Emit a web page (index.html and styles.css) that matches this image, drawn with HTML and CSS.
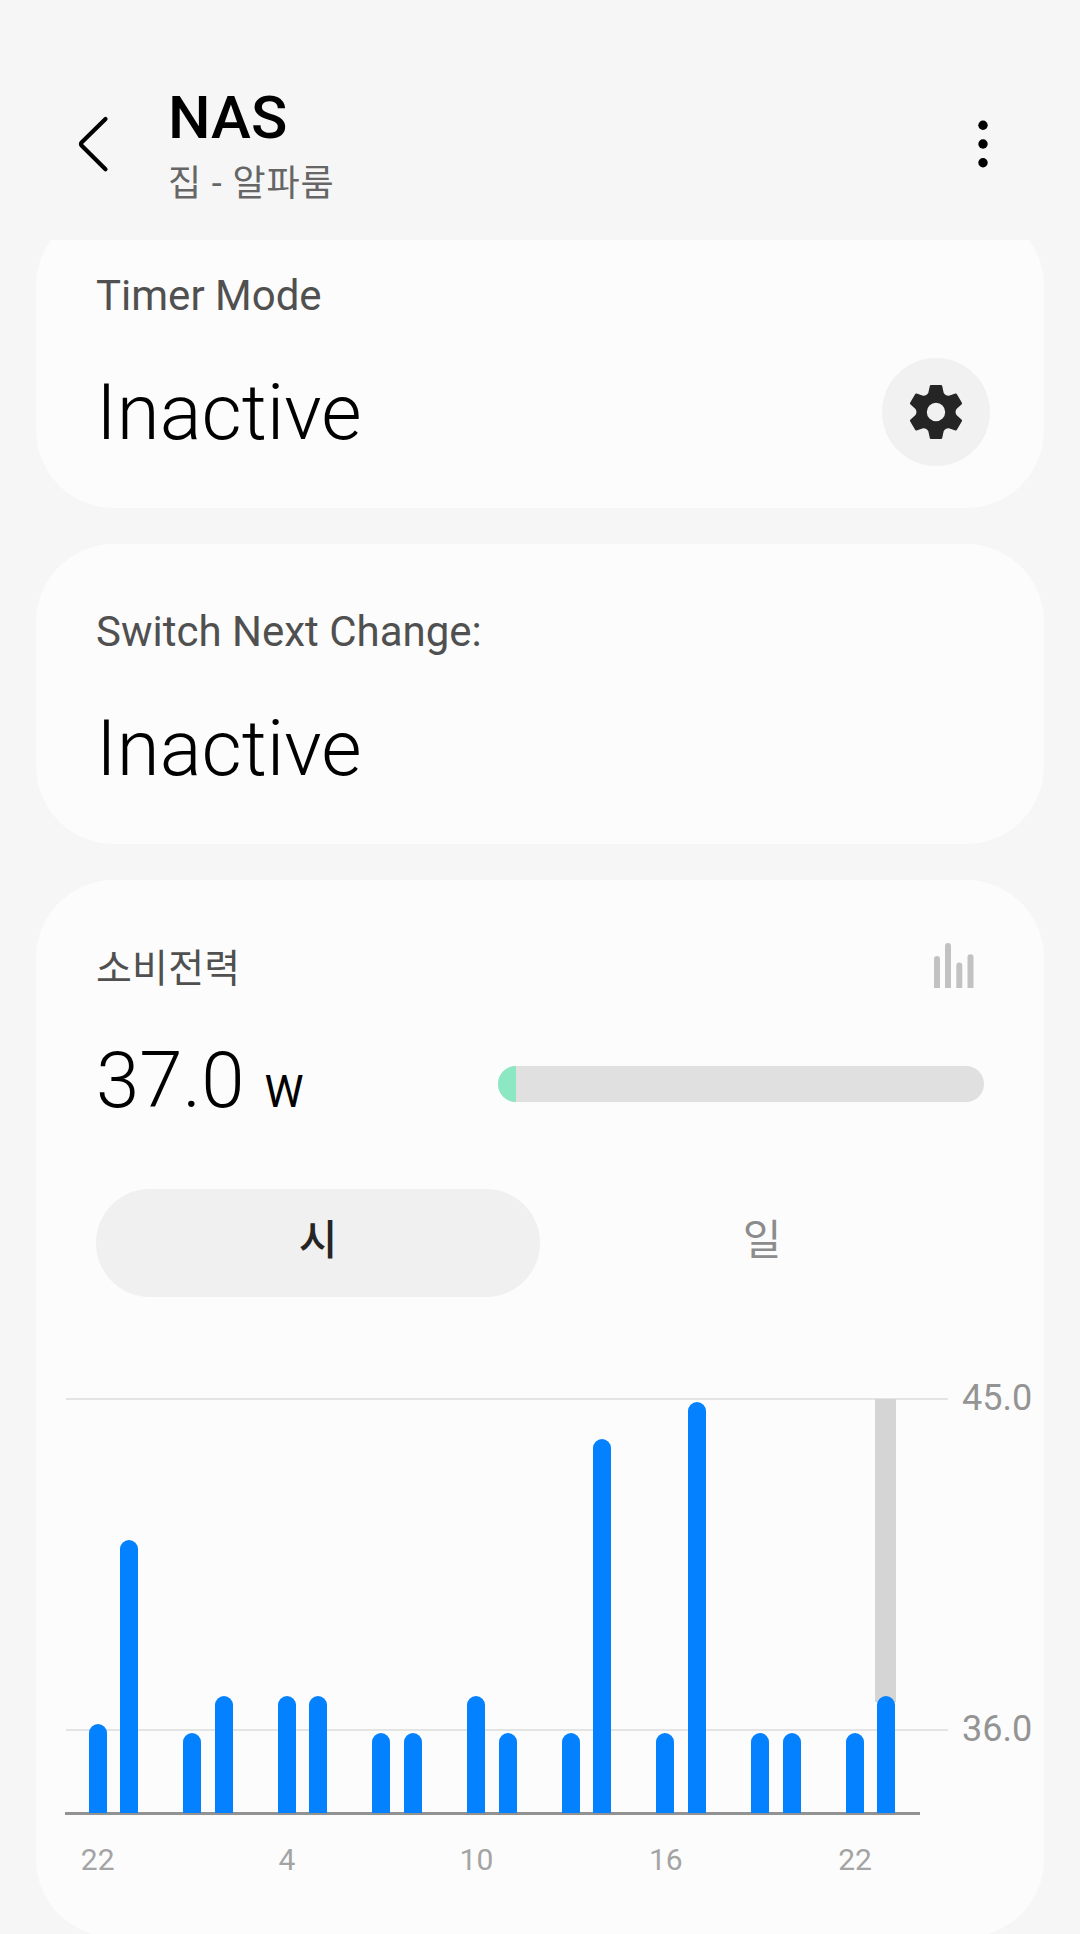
FILE: index.html
```html
<!DOCTYPE html>
<html lang="ko">
<head>
<meta charset="utf-8">
<title>NAS</title>
<link rel="stylesheet" href="styles.css">
</head>
<body>
<header class="topbar">
  <svg class="back" width="36" height="60" viewBox="0 0 36 60" aria-hidden="true"><path d="M29.5 5 5.800 28.200Q4 30 5.800 31.800L29.500 55.300"/></svg>
  <div class="heading">
    <h1 class="title">NAS</h1>
    <p class="subtitle">집 - 알파룸</p>
  </div>
  <svg class="more" width="12" height="50" viewBox="0 0 12 50" aria-hidden="true"><circle cx="6" cy="6.3" r="4.7"/><circle cx="6" cy="25" r="4.7"/><circle cx="6" cy="43.7" r="4.7"/></svg>
</header>
<main class="content">
  <section class="card timer">
    <h2 class="label">Timer Mode</h2>
    <div class="row">
      <p class="value">Inactive</p>
      <button class="settings" aria-label="Settings">
        <svg width="56" height="56" viewBox="-28 -28 56 56"><path fill-rule="evenodd" d="M-5-27H5Q6-27 6.2-26L7.65-19.25Q9.3-16.1 12.85-16.25L19.4-18.4Q20.4-18.7 20.9-17.8L25.9-9.2Q26.3-8.3 25.7-7.7L20.5-3Q18.6 0 20.5 3L25.7 7.7Q26.3 8.3 25.9 9.2L20.9 17.8Q20.4 18.7 19.4 18.4L12.85 16.25Q9.3 16.1 7.65 19.25L6.2 26Q6 27 5 27H-5Q-6 27-6.2 26L-7.65 19.25Q-9.3 16.1-12.85 16.25L-19.4 18.4Q-20.4 18.7-20.9 17.8L-25.9 9.2Q-26.3 8.3-25.7 7.7L-20.5 3Q-18.6 0-20.5-3L-25.7-7.7Q-26.3-8.3-25.9-9.2L-20.9-17.8Q-20.4-18.7-19.4-18.4L-12.85-16.25Q-9.3-16.1-7.65-19.25L-6.2-26Q-6-27-5-27ZM0-9.2A9.2 9.2 0 1 0 0 9.2A9.2 9.2 0 1 0 0-9.2Z"/></svg>
      </button>
    </div>
  </section>
  <section class="card">
    <h2 class="label">Switch Next Change:</h2>
    <div class="row"><p class="value">Inactive</p></div>
  </section>
  <section class="card power">
    <div class="power-head">
      <h2 class="label label-ko">소비전력</h2>
      <svg class="bars-icon" width="40" height="46" viewBox="0 0 40 46" aria-hidden="true"><path d="M0 45V16a3 3 0 0 1 6 0V45ZM11 45V3a3 3 0 0 1 6 0V45ZM22.300 45V22.500a3 3 0 0 1 6 0V45ZM33.500 45V14.300a3 3 0 0 1 6 0V45Z"/></svg>
    </div>
    <div class="reading">
      <p class="value">37.0 <span class="unit">W</span></p>
      <div class="meter"><div class="meter-fill" style="width:3.7%"></div></div>
    </div>
    <div class="tabs">
      <button class="tab active">시</button>
      <button class="tab">일</button>
    </div>
    <div class="chart">
      <div class="plot">
        <div class="gridline top"></div>
        <div class="gridline mid"></div>
        <div class="bars">
          <div class="slot"><i class="bar" style="height:89px"></i></div>
          <div class="slot"><i class="bar" style="height:273px"></i></div>
          <div class="slot"></div>
          <div class="slot"><i class="bar" style="height:80px"></i></div>
          <div class="slot"><i class="bar" style="height:117px"></i></div>
          <div class="slot"></div>
          <div class="slot"><i class="bar" style="height:117px"></i></div>
          <div class="slot"><i class="bar" style="height:117px"></i></div>
          <div class="slot"></div>
          <div class="slot"><i class="bar" style="height:80px"></i></div>
          <div class="slot"><i class="bar" style="height:80px"></i></div>
          <div class="slot"></div>
          <div class="slot"><i class="bar" style="height:117px"></i></div>
          <div class="slot"><i class="bar" style="height:80px"></i></div>
          <div class="slot"></div>
          <div class="slot"><i class="bar" style="height:80px"></i></div>
          <div class="slot"><i class="bar" style="height:374px"></i></div>
          <div class="slot"></div>
          <div class="slot"><i class="bar" style="height:80px"></i></div>
          <div class="slot"><i class="bar" style="height:411px"></i></div>
          <div class="slot"></div>
          <div class="slot"><i class="bar" style="height:80px"></i></div>
          <div class="slot"><i class="bar" style="height:80px"></i></div>
          <div class="slot"></div>
          <div class="slot"><i class="bar" style="height:80px"></i></div>
          <div class="slot current"><i class="bar" style="height:117px"></i></div>
        </div>
      </div>
      <div class="scale"><span>45.0</span><span>36.0</span></div>
      <div class="hours"><span>22</span><span>4</span><span>10</span><span>16</span><span>22</span></div>
    </div>
  </section>
</main>
</body>
</html>
```
FILE: styles.css
```css
* { box-sizing: border-box; margin: 0; padding: 0; }

body {
  width: 1080px;
  height: 1934px;
  overflow: hidden;
  display: flex;
  flex-direction: column;
  background: #f6f6f6;
  color: #000;
  font-family: Roboto, "Noto Sans CJK KR", sans-serif;
}

button { border: 0; background: none; font: inherit; }
svg { display: block; }

.topbar {
  flex: none;
  height: 240px;
  display: flex;
  align-items: flex-start;
  padding: 82px 91px 0 76px;
}
.back { margin-top: 32px; fill: none; stroke: #000; stroke-width: 4.2; stroke-linecap: round; }
.heading { flex: 1; margin: 1px 0 0 56px; }
.title { font-size: 60px; line-height: 70px; font-weight: 500; }
.subtitle { margin-top: 9px; font-size: 36px; line-height: 44px; letter-spacing: 0.9px; color: #666; }
.more { margin-top: 37px; }

.content {
  flex: 1;
  min-height: 0;
  overflow: hidden;
  display: flex;
  flex-direction: column;
  gap: 36px;
  padding: 0 36px;
}
.card {
  flex: none;
  height: 300px;
  padding: 63px 54px 0 60px;
  border-radius: 78px;
  background: #fcfcfc;
}
.timer { margin-top: -32px; }
.label { font-size: 42px; line-height: 50px; font-weight: 400; color: #505050; }
.row { display: flex; justify-content: space-between; margin-top: 37px; height: 108px; align-items: center; }
.value { padding-top: 2px; font-size: 78px; line-height: 92px; font-weight: 300; }
.settings {
  display: grid;
  place-items: center;
  width: 108px;
  height: 108px;
  border-radius: 50%;
  background: #f1f1f1;
  fill: #252525;
}

.power { height: 1057px; padding: 63px 0 0; }
.power-head { display: flex; justify-content: space-between; height: 50px; padding: 0 70px 0 60px; }
.label-ko { padding-top: 1px; font-size: 39px; letter-spacing: 0.2px; }
.bars-icon { fill: #c2c2c2; }
.reading {
  display: flex;
  justify-content: space-between;
  align-items: flex-start;
  height: 92px;
  margin-top: 41px;
  padding: 0 60px;
}
.reading .value { padding-top: 1px; }
.unit { margin-left: 1px; font-size: 44px; font-weight: 400; }
.meter { width: 486px; height: 36px; margin-top: 32px; border-radius: 18px; background: #e0e0e0; overflow: hidden; }
.meter-fill { height: 100%; background: #8ce8c3; }

.tabs { display: flex; margin: 63px 60px 0; }
.tab { flex: 1; height: 108px; padding-bottom: 4px; border-radius: 54px; font-size: 42px; line-height: 50px; color: #8c8c8c; }
.tab.active { background: #f0f0f0; color: #252525; font-weight: 500; }

.chart {
  display: grid;
  grid-template: 417px auto / 883px 1fr;
  margin: 101px 0 0 29px;
}
.plot { position: relative; display: flex; align-items: flex-start; }
.gridline { position: absolute; left: 1px; right: 0; height: 2px; background: #e4e4e4; }
.gridline.top { top: 0; }
.gridline.mid { top: 331px; }
.bars {
  position: relative;
  display: flex;
  width: 855px;
  height: 417px;
  padding-left: 16.8px;
  border-bottom: 3px solid #929292;
}
.slot { flex: none; width: 31.56px; height: 415px; display: flex; justify-content: center; align-items: flex-end; }
.slot.current { background: linear-gradient(#d5d5d5, #d5d5d5) 5px 1px / 21px 303px no-repeat; }
.bar { position: relative; width: 18px; border-radius: 9px 9px 0 0; background: #0381fe; }
.scale { padding-left: 14px; font-size: 36px; line-height: 42px; color: #949494; }
.scale span { display: block; }
.scale span:first-child { margin-top: -21px; }
.scale span + span { margin-top: 289px; }
.hours {
  grid-column: 1 / -1;
  display: flex;
  margin-top: 27px;
  margin-left: -62px;
  font-size: 30px;
  line-height: 36px;
  color: #a4a4a4;
}
.hours span { width: 189.36px; text-align: center; }
```
